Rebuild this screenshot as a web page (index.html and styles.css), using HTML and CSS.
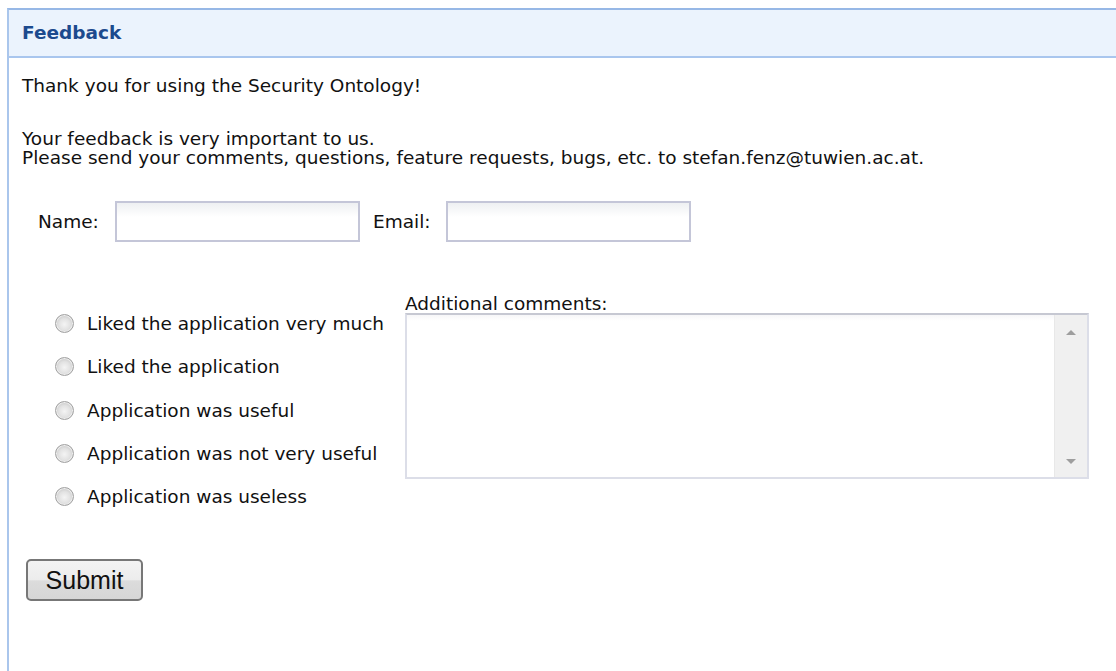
FILE: index.html
```html
<!DOCTYPE html>
<html lang="en">
<head>
<meta charset="utf-8">
<title>Feedback</title>
<link rel="stylesheet" href="styles.css">
</head>
<body>
<div class="panel">
  <div class="panel-header">Feedback</div>
  <div class="panel-body">
    <p class="intro">Thank you for using the Security Ontology!</p>
    <p class="intro">Your feedback is very important to us.<br>Please send your comments, questions, feature requests, bugs, etc. to stefan.fenz@tuwien.ac.at.</p>

    <div class="contact-row">
      <label class="field-label name-label">Name:</label>
      <div class="text-input"></div>
      <label class="field-label email-label">Email:</label>
      <div class="text-input"></div>
    </div>

    <div class="opinion">
      <div class="choices">
        <div class="choice"><span class="radio"></span><span>Liked the application very much</span></div>
        <div class="choice"><span class="radio"></span><span>Liked the application</span></div>
        <div class="choice"><span class="radio"></span><span>Application was useful</span></div>
        <div class="choice"><span class="radio"></span><span>Application was not very useful</span></div>
        <div class="choice"><span class="radio"></span><span>Application was useless</span></div>
      </div>
      <div class="comments">
        <div class="comments-label">Additional comments:</div>
        <div class="textarea">
          <div class="textarea-text"></div>
          <div class="scrollbar">
            <span class="arrow up"></span>
            <span class="arrow down"></span>
          </div>
        </div>
      </div>
    </div>

    <div class="actions">
      <button class="submit" type="button">Submit</button>
    </div>
  </div>
</div>
</body>
</html>
```

FILE: styles.css
```css
html, body {
  margin: 0;
  padding: 0;
  background: #ffffff;
  overflow: hidden;
}

body {
  width: 1116px;
  height: 671px;
  box-sizing: border-box;
  padding: 8px 0 0 7px;
  font-family: "DejaVu Sans", Verdana, sans-serif;
  font-size: 18.5px;
  color: #111111;
}

/* panel runs off the right and bottom of the window */
.panel {
  height: 663px;
  border-left: 2px solid #aac6ec;
  border-top: 2px solid #97b8e6;
  box-sizing: border-box;
  overflow: hidden;
}

.panel-header {
  height: 48px;
  box-sizing: border-box;
  background: #ebf3fd;
  border-bottom: 2px solid #a9c6ee;
  padding: 12px 0 0 13px;
  font-weight: bold;
  font-size: 18.5px;
  color: #1c4a8e;
  line-height: 22px;
}

.panel-body {
  padding: 18px 0 0 13px;
}

.intro {
  margin: 0 0 34px 0;
  line-height: 19px;
}

.intro + .intro {
  margin-bottom: 0;
}

.contact-row {
  display: flex;
  align-items: center;
  margin-top: 34px;
  padding-left: 16px;
}

.field-label {
  line-height: 20px;
}

.name-label {
  width: 77px;
}

.email-label {
  margin-left: 13px;
  width: 73px;
}

.text-input {
  width: 245px;
  height: 41px;
  box-sizing: border-box;
  border: 2px solid #c4c6d8;
  background: linear-gradient(#eef0f2 0, #ffffff 14px);
}

.opinion {
  display: flex;
  margin-top: 52px;
}

.choices {
  width: 383px;
  padding-top: 8px;
  display: flex;
  flex-direction: column;
}

.choice {
  display: flex;
  align-items: center;
  height: 43.3px;
  padding-left: 33px;
}

.radio {
  width: 17px;
  height: 17px;
  border-radius: 50%;
  border: 1px solid #a2a2a2;
  background: radial-gradient(circle at 50% 55%, #f4f4f4 0, #e2e2e2 45%, #c9c9c9 75%, #bdbdbd 100%);
  box-shadow: inset 0 0 0 1px #eeeeee;
  margin-right: 13px;
  flex: none;
}

.comments {
  display: flex;
  flex-direction: column;
}

.comments-label {
  line-height: 19px;
}

.textarea {
  width: 684px;
  height: 166px;
  box-sizing: border-box;
  border: 2px solid #dcdee8;
  border-top-color: #c6c8d2;
  display: flex;
  background: #ffffff;
}

.textarea-text {
  flex: 1;
  background: linear-gradient(#f6f6f8 0, #ffffff 6px);
}

.scrollbar {
  width: 32px;
  background: #f0f0f0;
  border-left: 1px solid #e8e8e8;
  position: relative;
}

.arrow {
  position: absolute;
  left: 11px;
  width: 0;
  height: 0;
  border-left: 5px solid transparent;
  border-right: 5px solid transparent;
}

.arrow.up {
  top: 15px;
  border-bottom: 5px solid #9e9e9e;
}

.arrow.down {
  bottom: 13px;
  border-top: 5px solid #9e9e9e;
}

.actions {
  margin-top: 41px;
  padding-left: 4px;
}

.submit {
  width: 117px;
  height: 42px;
  border: 2px solid #777777;
  border-radius: 5px;
  background: linear-gradient(#f3f3f3 0, #ececec 50%, #dcdcdc 52%, #d6d6d6 100%);
  font-family: "Liberation Sans", Arial, sans-serif;
  font-size: 25px;
  color: #111111;
  padding: 0;
  line-height: 1;
}
```
